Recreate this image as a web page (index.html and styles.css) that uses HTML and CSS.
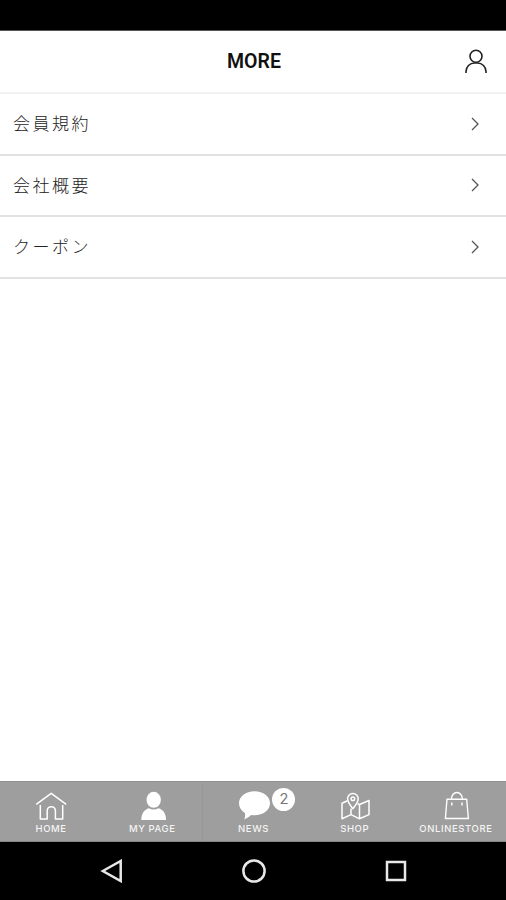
FILE: index.html
```html
<!DOCTYPE html>
<html lang="ja">
<head>
    <meta charset="UTF-8">
    <meta name="viewport" content="width=device-width, initial-scale=1.0">
    <title>MORE</title>
    <link rel="stylesheet" href="styles.css">
</head>
<body>
    <div class="screen">
        <div class="status-bar"></div>

        <!-- ヘッダー -->
        <header class="header">
            <h1 class="title">MORE</h1>
            <svg class="user-icon" viewBox="0 0 24 26">
                <circle cx="12" cy="7.3" r="6"/>
                <path d="M2 24v-1.500a8.500 8.500 0 0 1 8.500-8.500h3a8.500 8.500 0 0 1 8.500 8.500v1.500"/>
            </svg>
        </header>

        <!-- メニュー -->
        <ul class="menu">
            <li class="menu-item">
                <span class="menu-label">会員規約</span>
                <svg class="chevron" viewBox="0 0 8 14"><path d="M1 1l6 6-6 6"/></svg>
            </li>
            <li class="menu-item">
                <span class="menu-label">会社概要</span>
                <svg class="chevron" viewBox="0 0 8 14"><path d="M1 1l6 6-6 6"/></svg>
            </li>
            <li class="menu-item">
                <span class="menu-label">クーポン</span>
                <svg class="chevron" viewBox="0 0 8 14"><path d="M1 1l6 6-6 6"/></svg>
            </li>
        </ul>

        <!-- タブバー -->
        <nav class="tab-bar">
            <div class="tab">
                <svg class="tab-icon" viewBox="0 0 40 32">
                    <path d="M5.200 14.300L20.200 3.300l15 11M9.300 15v14h6.900v-8.200a4.100 4.100 0 0 1 8.200 0v8.200h7.300V15"/>
                </svg>
                <span class="tab-label">HOME</span>
            </div>
            <div class="tab">
                <svg class="tab-icon solid" viewBox="0 0 40 32">
                    <ellipse cx="21.700" cy="9.800" rx="7.200" ry="8"/>
                    <path d="M9.300 30c0-6.500 3.200-10.500 7.600-11.700 3 1.700 6.600 1.700 9.600 0 4.400 1.200 7.600 5.200 7.600 11.700z"/>
                </svg>
                <span class="tab-label">MY PAGE</span>
            </div>
            <div class="tab divided">
                <svg class="tab-icon solid" viewBox="0 0 40 32">
                    <path d="M21.500 1.300c8.800 0 15.500 5.200 15.500 12s-6.700 12-15.500 12c-1.200 0-2.400-.1-3.500-.3-2 2-4.300 3.500-6.800 4.400.9-2 1.200-4.200.7-6.400C8.300 20.800 6 17.300 6 13.300c0-6.800 6.700-12 15.500-12z"/>
                </svg>
                <span class="badge">2</span>
                <span class="tab-label">NEWS</span>
            </div>
            <div class="tab">
                <svg class="tab-icon" viewBox="0 0 40 32">
                    <path d="M13.500 10.800l-5.500 2.500v15.500l9-4.200 8.500 4.200 9.500-4.200V10.500l-9.500 4-2-.8M17 18.500v6M25.500 14.500v14.300"/>
                    <path d="M18.900 18.800c-3.200-4-5.300-6.800-5.300-10a5.300 5.300 0 0 1 10.600 0c0 3.200-2.100 6-5.300 10z"/>
                    <circle cx="18.900" cy="8.800" r="1.800"/>
                </svg>
                <span class="tab-label">SHOP</span>
            </div>
            <div class="tab">
                <svg class="tab-icon thin" viewBox="0 0 40 32">
                    <path d="M12 9.300h19.700l1.700 19.200H10.400zM16.300 9.300a5.600 6.800 0 0 1 11.200 0M16.800 12.500v3M27 12.500v3"/>
                </svg>
                <span class="tab-label">ONLINESTORE</span>
            </div>
        </nav>

        <!-- 端末ナビゲーション -->
        <div class="system-nav">
            <svg class="nav-icon" viewBox="0 0 24 24"><path d="M2.800 12L20.700 2v20z"/></svg>
            <svg class="nav-icon" viewBox="0 0 24 24"><circle cx="12" cy="12" r="10.600"/></svg>
            <svg class="nav-icon" viewBox="0 0 24 24"><path d="M3 3h18v18H3z"/></svg>
        </div>
    </div>
</body>
</html>
```

FILE: styles.css
```css
* {
    box-sizing: border-box;
    margin: 0;
    padding: 0;
}

body {
    background: #fff;
    font-family: Roboto, "Noto Sans CJK JP", sans-serif;
}

.screen {
    display: flex;
    flex-direction: column;
    height: 900px;
}

.status-bar {
    height: 31px;
    background: #000;
    border-bottom: 1px solid #555;
}

/* ヘッダー */
.header {
    display: grid;
    grid-template-columns: 1fr auto 1fr;
    align-items: center;
    height: 63px;
    padding: 0 18px 0 20px;
    border-bottom: 2px solid #f2f2f2;
}

.title {
    grid-column: 2;
    padding-top: 1px;
    font-size: 19.5px;
    font-weight: 600;
    line-height: 24px;
    color: #111;
}

.user-icon {
    justify-self: end;
    width: 24px;
    height: 26px;
    fill: none;
    stroke: #222;
    stroke-width: 1.6;
}

/* メニュー */
.menu {
    flex: 1;
    list-style: none;
}

.menu-item {
    display: flex;
    align-items: center;
    justify-content: space-between;
    height: 61.5px;
    padding: 0 27px 0 13px;
    border-bottom: 2px solid #e2e2e2;
    font-family: "Noto Sans CJK JP", sans-serif;
    font-size: 17px;
    font-weight: 300;
    letter-spacing: 2.5px;
    color: #222;
}

.menu-label {
    padding-bottom: 2px;
}

.chevron {
    width: 8px;
    height: 14px;
    fill: none;
    stroke: #555;
    stroke-width: 1.3;
}

/* タブバー */
.tab-bar {
    display: flex;
    height: 61px;
    background: #9e9e9e;
    border-top: 1px solid #929292;
    border-bottom: 1px solid #858585;
}

.tab {
    position: relative;
    display: flex;
    flex: 1 1 0;
    flex-direction: column;
    align-items: center;
    padding-top: 8px;
}

.divided {
    box-shadow: inset 1px 0 #979797;
}

.tab-icon {
    width: 40px;
    height: 32px;
    fill: none;
    stroke: #fff;
    stroke-width: 1.5;
    stroke-linejoin: round;
}

.tab-icon.thin {
    stroke-width: 1.4;
}

.tab-icon.solid {
    fill: #fff;
    stroke: none;
}

.tab-label {
    padding-left: 1px;
    font-family: Inter, Roboto, sans-serif;
    font-size: 9.5px;
    font-weight: 500;
    line-height: 13px;
    letter-spacing: 0.6px;
    color: #f4f4f4;
    white-space: nowrap;
}

/* 未読件数 */
.badge {
    position: absolute;
    top: 6px;
    left: 70px;
    width: 23px;
    height: 23px;
    border-radius: 50%;
    background: #fff;
    color: #777;
    font-size: 15px;
    line-height: 23px;
    text-align: center;
}

/* 端末ナビゲーション */
.system-nav {
    display: flex;
    align-items: center;
    justify-content: space-between;
    height: 58px;
    padding: 0 98px 0 100px;
    background: #000;
}

.nav-icon {
    width: 24px;
    height: 24px;
    fill: none;
    stroke: #e8e8e8;
    stroke-width: 2.5;
}
```
